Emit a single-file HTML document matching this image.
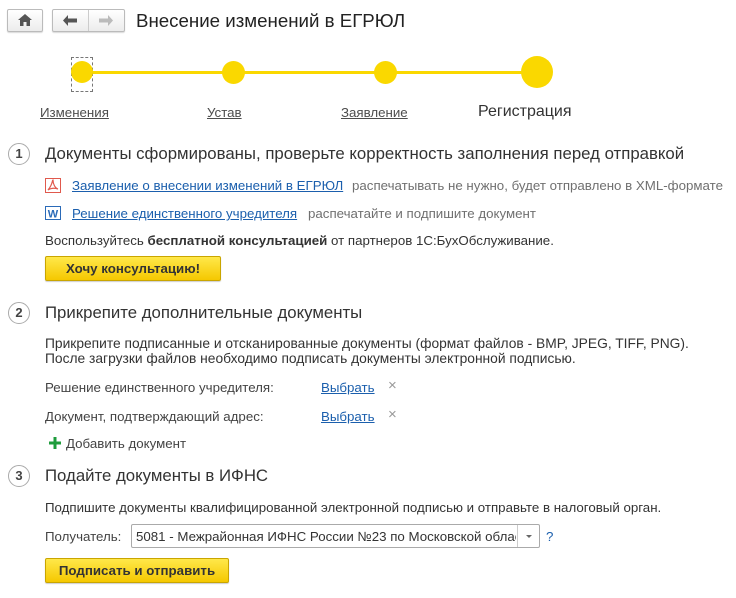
<!DOCTYPE html>
<html><head><meta charset="utf-8"><style>
*{margin:0;padding:0;box-sizing:border-box}
body{width:736px;height:598px;background:#fff;font-family:"Liberation Sans",Arial,sans-serif;color:#333;position:relative;overflow:hidden;font-size:13.3px}
.a{position:absolute;white-space:nowrap}
.btn{position:absolute;border:1px solid #bbb;border-radius:2px;background:linear-gradient(#fff,#ececec);box-shadow:0 1px 1px rgba(0,0,0,.15)}
.dot{position:absolute;background:#fad800;border-radius:50%}
.lk{color:#4d4d4d;text-decoration:underline}
.bl{color:#1b5fad;text-decoration:underline}
.num{position:absolute;width:22px;height:22px;border:1px solid #aaa;border-radius:50%;font-size:13px;font-weight:bold;text-align:center;line-height:20px;color:#444}
.h{font-size:16.8px;color:#333}
.gr{color:#707070}
.x{position:absolute;color:#999;font-size:15px}
.yb{position:absolute;background:linear-gradient(#ffe84a,#f5c800);border:1px solid #c9a500;border-radius:2px;font-weight:bold;color:#333;text-align:center;box-shadow:0 1px 1px rgba(0,0,0,.2)}
</style></head><body>
<div class="btn" style="left:7px;top:9px;width:36px;height:23px"></div>
<svg class="a" style="left:18px;top:14px" width="14" height="12" viewBox="0 0 14 12"><path d="M7 0L0 6h2v6h3.5V8h3v4H12V6h2z" fill="#555"/></svg>
<div class="btn" style="left:52px;top:9px;width:73px;height:23px"></div>
<div class="a" style="left:88px;top:10px;width:1px;height:21px;background:#ccc"></div>
<svg class="a" style="left:63px;top:15px" width="14" height="11" viewBox="0 0 14 11"><path d="M0 5.5L5 0v3.5h9v4H5V11z" fill="#555"/></svg>
<svg class="a" style="left:99px;top:15px" width="14" height="11" viewBox="0 0 14 11"><path d="M14 5.5L9 0v3.5H0v4h9V11z" fill="#bbb"/></svg>
<div class="a" style="left:136px;top:10px;font-size:18.7px;color:#222">Внесение изменений в ЕГРЮЛ</div>

<div class="a" style="left:82px;top:71px;width:455px;height:3px;background:#fad800"></div>
<div class="a" style="left:71px;top:57px;width:22px;height:35px;border:1px dashed #777"></div>
<div class="dot" style="left:71px;top:61px;width:22px;height:22px"></div>
<div class="dot" style="left:222px;top:61px;width:23px;height:23px"></div>
<div class="dot" style="left:374px;top:61px;width:23px;height:23px"></div>
<div class="dot" style="left:521px;top:56px;width:32px;height:32px"></div>
<div class="a lk" style="left:40px;top:105px">Изменения</div>
<div class="a lk" style="left:207px;top:105px">Устав</div>
<div class="a lk" style="left:341px;top:105px">Заявление</div>
<div class="a" style="left:478px;top:103px;font-size:16px;color:#333">Регистрация</div>

<div class="num" style="left:8px;top:143px">1</div>
<div class="a h" style="left:45px;top:144px">Документы сформированы, проверьте корректность заполнения перед отправкой</div>
<svg class="a" style="left:45px;top:178px" width="16" height="15" viewBox="0 0 16 15"><rect x=".5" y=".5" width="15" height="14" fill="#fff" stroke="#e0594d"/><path d="M8 2c-1 0 0 4-5 10 3-2 7-2 10-1-3-1-5-5-5-9z" fill="none" stroke="#e0594d" stroke-width="1.2"/></svg>
<div class="a bl" style="left:72px;top:178px">Заявление о внесении изменений в ЕГРЮЛ</div>
<div class="a gr" style="left:352px;top:178px">распечатывать не нужно, будет отправлено в XML-формате</div>
<svg class="a" style="left:45px;top:206px" width="16" height="14" viewBox="0 0 16 14"><rect x=".5" y=".5" width="15" height="13" fill="#fff" stroke="#2a6ab8"/><text x="8" y="11.5" font-size="11" font-weight="bold" fill="#2a6ab8" text-anchor="middle" font-family="Liberation Sans">W</text></svg>
<div class="a bl" style="left:72px;top:206px">Решение единственного учредителя</div>
<div class="a gr" style="left:308px;top:206px">распечатайте и подпишите документ</div>
<div class="a" style="left:45px;top:233px">Воспользуйтесь <b>бесплатной консультацией</b> от партнеров 1С:БухОбслуживание.</div>
<div class="yb" style="left:45px;top:256px;width:176px;height:25px;line-height:23px">Хочу консультацию!</div>

<div class="num" style="left:8px;top:302px">2</div>
<div class="a h" style="left:45px;top:303px">Прикрепите дополнительные документы</div>
<div class="a" style="left:45px;top:336px;line-height:15px;font-size:13.8px">Прикрепите подписанные и отсканированные документы (формат файлов - BMP, JPEG, TIFF, PNG).<br>После загрузки файлов необходимо подписать документы электронной подписью.</div>
<div class="a" style="left:45px;top:380px;color:#444">Решение единственного учредителя:</div>
<div class="a bl" style="left:321px;top:380px">Выбрать</div>
<div class="x" style="left:388px;top:377px">×</div>
<div class="a" style="left:45px;top:409px;color:#444">Документ, подтверждающий адрес:</div>
<div class="a bl" style="left:321px;top:409px">Выбрать</div>
<div class="x" style="left:388px;top:406px">×</div>
<svg class="a" style="left:49px;top:437px" width="12" height="12" viewBox="0 0 12 12"><path d="M4.5 0h3v4.5H12v3H7.5V12h-3V7.5H0v-3h4.5z" fill="#1e9c3c"/></svg>
<div class="a" style="left:66px;top:436px;color:#444">Добавить документ</div>

<div class="num" style="left:8px;top:465px">3</div>
<div class="a h" style="left:45px;top:466px">Подайте документы в ИФНС</div>
<div class="a" style="left:45px;top:500px">Подпишите документы квалифицированной электронной подписью и отправьте в налоговый орган.</div>
<div class="a" style="left:45px;top:529px;color:#444">Получатель:</div>
<div class="a" style="left:131px;top:524px;width:409px;height:24px;border:1px solid #aaa;border-radius:2px;overflow:hidden"><div style="position:absolute;left:4px;top:4px;width:380px;overflow:hidden;white-space:nowrap">5081 - Межрайонная ИФНС России №23 по Московской области</div><div style="position:absolute;left:385px;top:0;width:1px;height:22px;background:#ccc"></div><div style="position:absolute;left:394px;top:10px;border:3px solid transparent;border-top:3px solid #666"></div></div>
<div class="a" style="left:546px;top:529px;color:#1b5fad">?</div>
<div class="yb" style="left:45px;top:558px;width:184px;height:25px;line-height:23px">Подписать и отправить</div>
</body></html>
